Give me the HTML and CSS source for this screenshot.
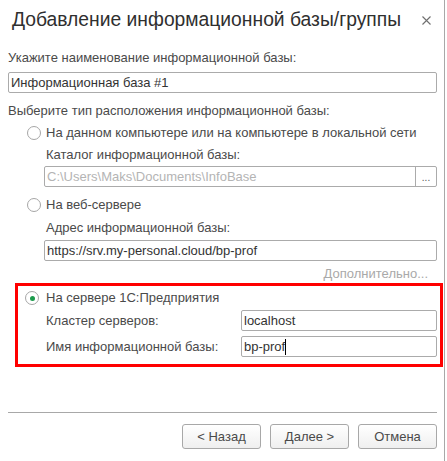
FILE: index.html
```html
<!DOCTYPE html>
<html lang="ru">
<head>
<meta charset="utf-8">
<title>Добавление информационной базы/группы</title>
<link rel="stylesheet" href="styles.css">
</head>
<body>
<div class="dialog">
  <div class="header">
    <h1 class="title">Добавление информационной базы/группы</h1>
    <svg class="close" width="9" height="9" viewBox="0 0 9 9"><path d="M0.5 0.5 L8.5 8.5 M8.5 0.5 L0.5 8.5" stroke="#6f6f6f" stroke-width="1.1" fill="none"/></svg>
  </div>
  <div class="content">
    <div class="label l-first">Укажите наименование информационной базы:</div>
    <div class="field f-name"><span class="val">Информационная база #1</span></div>
    <div class="label l-type">Выберите тип расположения информационной базы:</div>

    <div class="option o-local"><span class="radio"></span><span>На данном компьютере или на компьютере в локальной сети</span></div>
    <div class="sub">
      <div class="label l-sub">Каталог информационной базы:</div>
      <div class="field disabled"><span class="val">C:\Users\Maks\Documents\InfoBase</span><span class="dots">...</span></div>
    </div>

    <div class="option o-web"><span class="radio"></span><span>На веб-сервере</span></div>
    <div class="sub">
      <div class="label l-sub l-addr">Адрес информационной базы:</div>
      <div class="field"><span class="val">https://srv.my-personal.cloud/bp-prof</span></div>
    </div>
    <div class="more">Дополнительно...</div>

    <div class="highlight">
      <div class="option o-server"><span class="radio checked"></span><span>На сервере 1С:Предприятия</span></div>
      <div class="pair p-first">
        <span class="pair-label">Кластер серверов:</span>
        <div class="field"><span class="val">localhost</span></div>
      </div>
      <div class="pair">
        <span class="pair-label">Имя информационной базы:</span>
        <div class="field"><span class="val val-fixed">bp-prof</span><span class="caret"></span></div>
      </div>
    </div>
  </div>
  <div class="footer">
    <div class="separator"></div>
    <div class="buttons">
      <button class="btn">&lt; Назад</button>
      <button class="btn">Далее &gt;</button>
      <button class="btn">Отмена</button>
    </div>
  </div>
</div>
</body>
</html>
```
FILE: styles.css
```css
* { box-sizing: border-box; }
html, body {
  margin: 0;
  padding: 0;
  background: #fff;
}
body {
  font-family: "Liberation Sans", Arial, sans-serif;
  font-size: 13px;
  color: #4a4a4a;
}
.dialog {
  width: 445px;
  height: 461px;
  border-right: 1px solid #a8a8a8;
  display: flex;
  flex-direction: column;
}
.header {
  height: 40px;
  display: flex;
  align-items: center;
  justify-content: space-between;
  padding: 0 13px 0 12px;
}
.title {
  margin: 0;
  font-size: 19.3px;
  font-weight: normal;
  color: #2f2f2f;
  line-height: 40px;
  white-space: nowrap;
}
.close { display: block; margin-top: 1px; }
.content {
  padding: 0 0 0 8px;
  width: 437px;
}
.label {
  line-height: 16px;
  height: 16px;
  white-space: nowrap;
}
.l-first { margin-top: 10px; }
.l-type { margin-top: 10px; }
.field {
  height: 21px;
  border: 1px solid #ababab;
  border-radius: 2px;
  background: #fff;
  display: flex;
  align-items: center;
  color: #333;
  padding-left: 2px;
  white-space: nowrap;
}
.f-name { margin-top: 6px; }
.field .val { flex: 1; line-height: 19px; }
.field .val-fixed { flex: none; }
.field.disabled { color: #b4b4b4; }
.dots {
  width: 21px;
  height: 19px;
  border-left: 1px solid #ababab;
  text-align: center;
  line-height: 22px;
  color: #555;
  font-size: 10px;
}
.caret {
  display: block;
  width: 1px;
  height: 16px;
  background: #000;
}
.option {
  display: flex;
  align-items: center;
  height: 16px;
  line-height: 16px;
  white-space: nowrap;
}
.o-local { margin-top: 6px; padding-left: 19px; }
.o-web { margin-top: 10px; padding-left: 19px; }
.radio {
  width: 14px;
  height: 14px;
  border: 1px solid #a6a6a6;
  border-radius: 50%;
  background: #fff;
  margin-right: 5px;
  display: flex;
  align-items: center;
  justify-content: center;
  flex: none;
}
.radio.checked::after {
  content: "";
  width: 5px;
  height: 5px;
  border-radius: 50%;
  background: #1c9a4c;
}
.sub { padding-left: 36px; }
.l-sub { margin-top: 6px; padding-left: 2px; margin-bottom: 3px; }
.l-addr { margin-top: 7px; margin-bottom: 4px; }
.more {
  margin-top: 5px;
  text-align: right;
  padding-right: 9px;
  color: #a9a9a9;
  line-height: 16px;
  height: 16px;
}
.highlight {
  margin: 1px -6px 0 7px;
  border: 3px solid #f00;
  padding: 4px 3px 7px 7px;
}
.o-server .radio { margin-right: 7px; }
.pair {
  display: flex;
  align-items: center;
  margin-top: 5px;
}
.p-first { margin-top: 4px; }
.pair-label {
  width: 216px;
  flex: none;
  padding-left: 21px;
  white-space: nowrap;
}
.pair .field { flex: 1; }
.footer {
  margin-top: auto;
  padding: 0 0 12px 8px;
  width: 437px;
}
.separator {
  height: 1px;
  background: #a8a8a8;
}
.buttons {
  display: flex;
  justify-content: flex-end;
  gap: 9px;
  margin-top: 11px;
}
.btn {
  width: 79px;
  height: 25px;
  border: 1px solid #a8a8a8;
  border-radius: 3px;
  background: linear-gradient(#ffffff, #efefef);
  font-family: "Liberation Sans", Arial, sans-serif;
  font-size: 13px;
  color: #4a4a4a;
  padding: 0;
}
```
